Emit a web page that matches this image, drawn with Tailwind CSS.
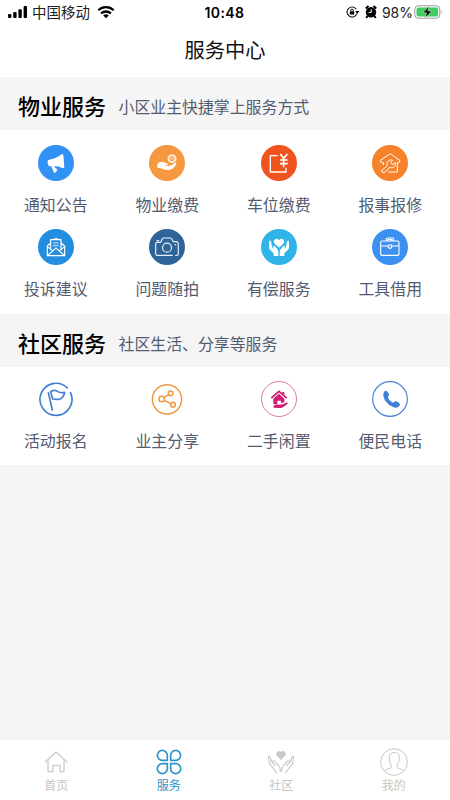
<!DOCTYPE html>
<html lang="zh-CN">
<head>
<meta charset="utf-8">
<meta name="viewport" content="width=device-width, initial-scale=1">
<title>服务中心</title>
<script src="https://cdn.jsdelivr.net/npm/@tailwindcss/browser@4"></script>
</head>
<body class="font-['Liberation_Sans','Noto_Sans_CJK_SC',sans-serif] bg-[#f5f5f5]">
<div class="w-[450px] h-[800px] flex flex-col overflow-hidden bg-[#f5f5f5] text-black">

  <header class="bg-white h-[77px] shrink-0">
    <div class="h-6 flex items-center justify-between pl-[7px] pr-[7px] relative">
      <div class="flex items-center h-6">
        <svg class="w-[21px] h-[14px]" viewBox="0 0 21 14"><g fill="#000"><rect x="1" y="9" width="3.4" height="4" rx="1"/><rect x="6.200" y="7" width="3.400" height="6" rx="1"/><rect x="11.400" y="4.300" width="3.400" height="8.700" rx="1"/><rect x="16.600" y="1" width="3.400" height="12" rx="1"/></g></svg>
        <span class="ml-[4px] pt-[2px] text-[14.500px] leading-6 text-[#222]">中国移动</span>
        <svg class="ml-[7px] w-[18px] h-[14px]" viewBox="0 0 18 14"><g fill="none" stroke="#000" stroke-width="2.300"><path d="M1.300 5.300a11 11 0 0 1 15.400 0"/><path d="M4.100 8.500a7 7 0 0 1 9.800 0"/></g><path d="M9 13.200L6.200 10.500a4 4 0 0 1 5.600 0Z"/></svg>
      </div>
      <span class="absolute left-[204.500px] top-0 leading-[25px] text-[14px] font-semibold tracking-[0.400px] font-['Inter','Liberation_Sans',sans-serif]">10:48</span>
      <div class="flex items-center h-6">
        <svg class="w-[14px] h-[12px]" viewBox="0 0 14 12"><path d="M10.200 3.200A5 5 0 1 0 10.800 7.600" fill="none" stroke="#222" stroke-width="1.200"/><path d="M9.300 5h4L11.200 8Z"/><rect x="3.800" y="5.300" width="4.400" height="3.300" rx=".5"/><path d="M4.700 5.500V4.500a1.300 1.300 0 0 1 2.600 0v1" fill="none" stroke="#000"/></svg>
        <svg class="ml-[5px] w-[12px] h-[14px]" viewBox="0 0 12 14"><circle cx="6" cy="7.200" r="5.200"/><path d="M.8 3.500L3.500 1M11.200 3.500L8.500 1M2.500 11L1.300 13M9.500 11l1.200 2" stroke="#000" stroke-width="1.900"/><path d="M6.200 4.200v3.200H3.700" fill="none" stroke="#fff" stroke-width="1"/></svg>
        <span class="ml-[5px] w-[31px] text-[14px] tracking-[-0.100px] leading-[25px] text-[#222] font-['Inter','Liberation_Sans',sans-serif] whitespace-nowrap">98%</span>
        <svg class="w-[29px] h-[14px] ml-[1px]" viewBox="0 0 29 14"><rect x=".8" y=".8" width="25" height="12.400" rx="3.500" fill="#fff" stroke="#999" stroke-width="1"/><rect x="2.500" y="2.500" width="21.600" height="9" rx="2" fill="#3fcd5f"/><path d="M27 5q1.600 2 0 4Z" fill="#999"/><path d="M15.500 1L8.800 7.800h3.800L11 13l6.800-7H13.800Z" fill="#000" stroke="#e8ffe8" stroke-width=".5"/></svg>
      </div>
    </div>
    <h1 class="text-center text-[20.300px] pt-[1px] leading-[53px] text-[#111]">服务中心</h1>
  </header>

  <section>
    <div class="h-[53px] flex items-center pl-[18px] pt-[8px]">
      <h2 class="text-[22px] font-medium leading-8 w-[100.500px]">物业服务</h2>
      <p class="text-[15.900px] leading-8 text-[#525b70]">小区业主快捷掌上服务方式</p>
    </div>
    <div class="bg-white h-[184px] w-full pt-[15px]">
      <div class="grid grid-cols-4 w-[446px] gap-y-[2px] text-[15.900px] leading-6 text-[#525b70]">
        <div class="h-[82px] flex flex-col items-center gap-[13px]">
          <svg class="w-9 h-9 shrink-0" viewBox="0 0 108 108"><circle cx="54" cy="54" r="54" fill="#3291f5"/><g fill="#fff"><path d="M31 45L50 40Q65 35 70 28Q74 25 76 30L79 65Q79 70 73 69Q64 64 50 63L34 64Q30 62 29 54Q28 47 31 45Z"/><path d="M40 64L49 63L52 69L58 73L54 82Q49 85 47 81Z"/></g></svg>
          <span>通知公告</span>
        </div>
        <div class="h-[82px] flex flex-col items-center gap-[13px]">
          <svg class="w-9 h-9 shrink-0" viewBox="0 0 108 108"><circle cx="54" cy="54" r="54" fill="#f5983f"/><circle cx="69" cy="41" r="13.500" fill="#ffe9d0"/><circle cx="69" cy="41" r="6" fill="none" stroke="#f5983f" stroke-width="3"/><path d="M66 41h6M69 37v9" stroke="#f5983f" stroke-width="2"/><path d="M25 57Q32 49 41 51L52 54Q59 56 56 61L45 61L57 64Q70 62 77 54Q83 52 82 58Q72 74 59 76L43 73L33 69L25 68Z" fill="#fff"/></svg>
          <span>物业缴费</span>
        </div>
        <div class="h-[82px] flex flex-col items-center gap-[13px]">
          <svg class="w-9 h-9 shrink-0" viewBox="0 0 108 108"><circle cx="54" cy="54" r="54" fill="#f0541e"/><g fill="none" stroke="#fff"><path d="M50 32H28V81H75V68" stroke-width="4"/><path d="M58 27L68 40L79 27M68 40V67M57 45H80M57 56H80" stroke-width="5"/></g></svg>
          <span>车位缴费</span>
        </div>
        <div class="h-[82px] flex flex-col items-center gap-[13px]">
          <svg class="w-9 h-9 shrink-0" viewBox="0 0 108 108"><circle cx="54" cy="54" r="54" fill="#f6822c"/><g fill="none" stroke="#fff" stroke-width="3" stroke-linejoin="round" stroke-linecap="round"><path d="M34 59V53L26 51L25 46L55 26L84 47L82 52L76 53V81H50"/><path d="M29 77L46 62Q42 50 52 46Q57 43 62 46L56 52L62 59L70 53Q73 64 62 68Q58 69 53 67L37 83Q30 85 29 77Z"/></g></svg>
          <span>报事报修</span>
        </div>
        <div class="h-[82px] flex flex-col items-center gap-[13px]">
          <svg class="w-9 h-9 shrink-0" viewBox="0 0 108 108"><circle cx="54" cy="54" r="54" fill="#238ee0"/><g fill="none" stroke="#fff" stroke-width="3.500" stroke-linejoin="round"><path d="M38 60V32H69V60M38 42L28 51V80H80V51L69 42M28 53L43 65M80 53L65 65M28 80L54 57L80 80"/><path d="M46 31Q54 24 62 31M45 42H62M45 50H62" stroke-width="2.500"/></g></svg>
          <span>投诉建议</span>
        </div>
        <div class="h-[82px] flex flex-col items-center gap-[13px]">
          <svg class="w-9 h-9 shrink-0" viewBox="0 0 108 108"><circle cx="54" cy="54" r="54" fill="#2f6499"/><g fill="none" stroke="#e4eff9" stroke-width="3.500" stroke-linecap="round" stroke-linejoin="round"><path d="M70 79H25Q20 79 20 74V45Q20 40 25 40H35L40 29Q41 27 44 27H64Q67 27 68 29L73 38H83Q88 39 88 45V74Q88 79 83 79H80"/><circle cx="54" cy="56" r="13.500"/><path d="M24 35H29M78 47H80"/></g></svg>
          <span>问题随拍</span>
        </div>
        <div class="h-[82px] flex flex-col items-center gap-[13px]">
          <svg class="w-9 h-9 shrink-0" viewBox="0 0 108 108"><circle cx="54" cy="54" r="54" fill="#2fb3e8"/><g fill="#fff"><path d="M54 56L42 45Q35 37 42 31Q49 27 54 34Q59 27 66 31Q73 37 66 45Z"/><path id="hand" d="M24 40Q24 34 28 35Q31 36 31 41L33 54L39 59L36 51Q39 48 43 53L50 62Q52 65 52 70V81H38V73L27 62Q24 59 24 54Z"/><use href="#hand" transform="translate(108 0) scale(-1 1)"/></g></svg>
          <span>有偿服务</span>
        </div>
        <div class="h-[82px] flex flex-col items-center gap-[13px]">
          <svg class="w-9 h-9 shrink-0" viewBox="0 0 108 108"><circle cx="54" cy="54" r="54" fill="#3b90f1"/><g fill="none" stroke="#fff" stroke-width="3.300" stroke-linejoin="round"><rect x="26" y="36" width="55" height="43" rx="4"/><path d="M43 36V30Q43 27 46 27H62Q65 27 65 30V36M48 36V32H60V36M26 51H48M60 51H81"/><path d="M49 48H59V55Q54 61 49 55Z"/></g></svg>
          <span>工具借用</span>
        </div>
      </div>
    </div>
  </section>

  <section>
    <div class="h-[53px] flex items-center pl-[18px] pt-[8px]">
      <h2 class="text-[22px] font-medium leading-8 w-[100.500px]">社区服务</h2>
      <p class="text-[15.900px] leading-8 text-[#525b70]">社区生活、分享等服务</p>
    </div>
    <div class="bg-white h-[98px] w-full pt-[14px]">
      <div class="grid grid-cols-4 w-[446px] text-[15.900px] leading-6 text-[#525b70]">
        <div class="h-[82px] flex flex-col items-center gap-[13px]">
          <svg class="w-9 h-9 shrink-0" viewBox="0 0 108 108"><g fill="none" stroke="#4480d2" stroke-width="5" stroke-linecap="round" stroke-linejoin="round"><path d="M88 21.100A48 48 0 1 0 97.500 34.700"/><path d="M31 35L43 87M38 32Q50 25 58 31Q67 37 80 34Q78 47 68 53Q60 57 44 54Z" stroke-width="5"/></g></svg>
          <span>活动报名</span>
        </div>
        <div class="h-[82px] flex flex-col items-center gap-[13px]">
          <svg class="w-9 h-9 shrink-0" viewBox="0 0 108 108"><g fill="none" stroke="#ee9842" stroke-width="4.500"><circle cx="54" cy="55" r="44"/><circle cx="38" cy="54" r="8.500"/><circle cx="65" cy="37" r="7"/><circle cx="72" cy="71" r="7"/><path d="M45 49L59 41M46 58L65 68"/></g></svg>
          <span>业主分享</span>
        </div>
        <div class="h-[82px] flex flex-col items-center gap-[13px]">
          <svg class="w-9 h-9 shrink-0" viewBox="0 0 108 108"><circle cx="54" cy="54" r="52.500" fill="none" stroke="#dc5c95" stroke-width="2.500"/><path d="M31 51L54 31L77 51" fill="none" stroke="#cf1a70" stroke-width="5"/><path d="M37 53L54 38L70 53V64L60 66V59H49V70H37ZM64 33H70V42L64 37Z" fill="#cf1a70"/><path d="M38 74Q47 69 54 71L66 70L75 65Q81 63 80 68L66 79Q62 82 56 81L38 80Z" fill="#cf1a70"/></svg>
          <span>二手闲置</span>
        </div>
        <div class="h-[82px] flex flex-col items-center gap-[13px]">
          <svg class="w-9 h-9 shrink-0" viewBox="0 0 108 108"><circle cx="54" cy="54" r="52" fill="none" stroke="#4885d2" stroke-width="3.500"/><path d="M36 33Q40 27 44 30L50 37Q53 42 48 47Q49 54 54 59Q59 64 64 65Q69 60 73 61L82 67Q86 70 82 75Q75 83 65 79Q50 74 41 61Q30 44 36 33Z" fill="#3d7fd9"/></svg>
          <span>便民电话</span>
        </div>
      </div>
    </div>
  </section>

  <nav class="mt-auto h-[60px] shrink-0 bg-white grid grid-cols-4 text-[12px] leading-4 text-[#c4c4c4]">
    <div class="flex flex-col items-center pt-[8px] gap-[2px]">
      <svg class="w-7 h-7" viewBox="0 0 84 84"><path d="M10 42L42 12L75 42M18 39V71H33V52H54V71H66V39" fill="none" stroke="#ccc" stroke-width="4" stroke-linejoin="round" stroke-linecap="round"/></svg>
      <span>首页</span>
    </div>
    <div class="flex flex-col items-center pt-[8px] gap-[2px] text-[#2b95c9]">
      <svg class="w-7 h-7" viewBox="0 0 84 84"><g fill="none" stroke="#2b95c9" stroke-width="5" stroke-linejoin="round"><path id="petal" d="M37 37V22A15 15 0 1 0 22 37Z"/><use href="#petal" transform="translate(84 0) scale(-1 1)"/><use href="#petal" transform="translate(0 84) scale(1 -1)"/><use href="#petal" transform="translate(84 84) scale(-1 -1)"/></g></svg>
      <span>服务</span>
    </div>
    <div class="flex flex-col items-center pt-[8px] gap-[2px]">
      <svg class="w-7 h-7" viewBox="0 0 84 84"><path d="M42 36L30 24Q25 16 31 11Q38 7 42 12Q46 7 53 11Q59 16 54 24Z" fill="#c8c8c8"/><g fill="none" stroke="#c8c8c8" stroke-width="3.500" stroke-linejoin="round" stroke-linecap="round"><path id="palm" d="M17 59L8 48L4 28Q5 23 9 27L15 43L25 53M17 45Q15 36 22 39L37 55Q40 59 40 70M17 59L29 75"/><use href="#palm" transform="translate(84 0) scale(-1 1)"/></g></svg>
      <span>社区</span>
    </div>
    <div class="flex flex-col items-center pt-[8px] gap-[2px]">
      <svg class="w-7 h-7" viewBox="0 0 84 84"><g fill="none" stroke="#c8c8c8" stroke-width="3"><circle cx="42" cy="42" r="40"/><path d="M13 69Q18 63 31 61Q35 59 34 51Q27 45 28 31Q27 13 43 13Q58 13 58 30Q58 45 51 51Q50 59 54 61Q66 63 71 69"/></g></svg>
      <span>我的</span>
    </div>
  </nav>
</div>
</body>
</html>
